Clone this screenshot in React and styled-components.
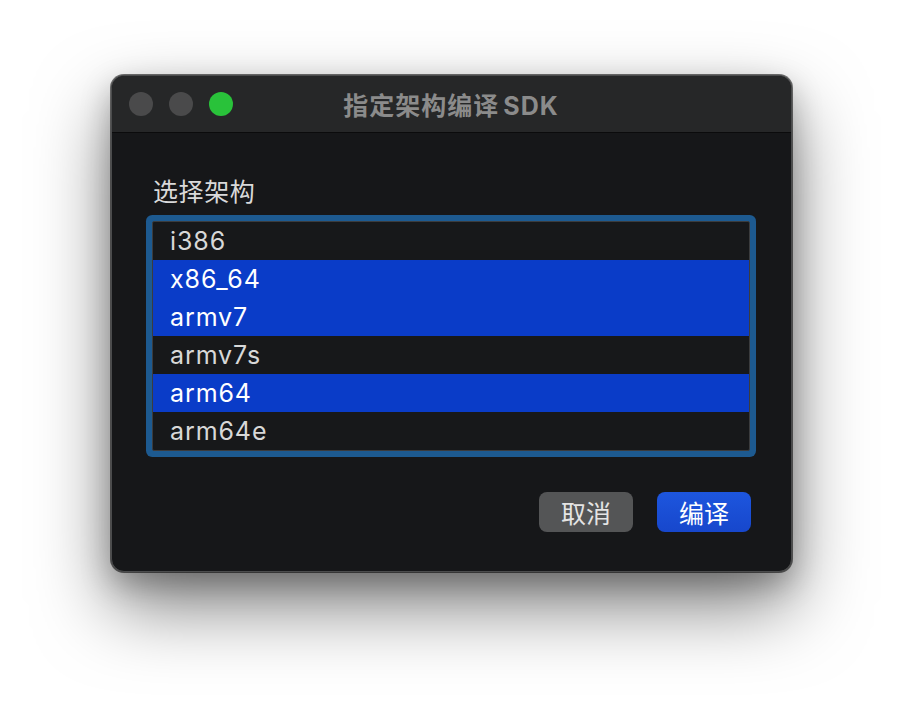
import React from "react";
import styled, { createGlobalStyle } from "styled-components";

const GlobalStyle = createGlobalStyle`
  html, body {
    margin: 0;
    padding: 0;
    background: #ffffff;
  }
  body {
    font-family: Inter, "Noto Sans CJK SC", sans-serif;
  }
`;

const Desktop = styled.div`
  width: 904px;
  height: 720px;
  padding: 75px 0 0 111px;
  box-sizing: border-box;
`;

const Window = styled.div`
  width: 681px;
  height: 497px;
  box-sizing: border-box;
  background: #161719;
  border: 1px solid #4b4c4d;
  border-radius: 13px;
  overflow: hidden;
  box-shadow: 0 0 0 1px rgba(0, 0, 0, 0.55), 0 34px 75px rgba(0, 0, 0, 0.5),
    0 12px 30px rgba(0, 0, 0, 0.25);
  display: flex;
  flex-direction: column;
`;

const TitleBar = styled.div`
  height: 56px;
  flex: none;
  background: #262728;
  border-bottom: 1px solid #0b0b0c;
  display: grid;
  grid-template-columns: 1fr auto 1fr;
  align-items: center;
  padding: 0 17px;
`;

const Lights = styled.div`
  display: flex;
  gap: 16px;
`;

const Light = styled.span`
  width: 24px;
  height: 24px;
  border-radius: 50%;
  background: ${(p) => p.$color};
`;

const Title = styled.div`
  font-family: Inter, "Noto Sans CJK SC", sans-serif;
  font-weight: 700;
  font-size: 25px;
  letter-spacing: 1px;
  color: #8b8b8b;
  margin-left: -1px;
`;

const Sdk = styled.span`
  margin-left: 4px;
`;

const Body = styled.div`
  flex: 1;
  padding: 42px 34px 40px 35px;
  display: flex;
  flex-direction: column;
`;

const Label = styled.div`
  font-family: "Noto Sans CJK SC", sans-serif;
  font-size: 25px;
  line-height: 30px;
  color: #d9d9d9;
  padding-left: 6px;
  letter-spacing: 0.6px;
`;

const List = styled.div`
  margin: 16px 7px 0 5px;
  border: 1px solid #3b3c3e;
  background: #17181a;
  box-shadow: 0 0 0 6px #1d5a90;
  border-radius: 2px;
`;

const Row = styled.div`
  height: 38px;
  display: flex;
  align-items: center;
  padding-left: 17px;
  font-family: Inter, sans-serif;
  font-size: 25px;
  letter-spacing: 0.9px;
  color: ${(p) => (p.$selected ? "#ffffff" : "#d8d8d8")};
  background: ${(p) => (p.$selected ? "#0a3cc8" : "transparent")};
`;

const Actions = styled.div`
  margin-top: 41px;
  display: flex;
  justify-content: flex-end;
  gap: 24px;
  padding-right: 6px;
`;

const Button = styled.button`
  width: 94px;
  height: 40px;
  border: none;
  border-radius: 8px;
  font-family: "Noto Sans CJK SC", sans-serif;
  font-size: 25px;
  color: ${(p) => (p.$primary ? "#ffffff" : "#e4e4e4")};
  background: ${(p) =>
    p.$primary ? "linear-gradient(#1d56de, #1747cc)" : "#545556"};
  display: flex;
  align-items: center;
  justify-content: center;
  padding: 0;
`;

const archs = [
  { name: "i386", selected: false },
  { name: "x86_64", selected: true },
  { name: "armv7", selected: true },
  { name: "armv7s", selected: false },
  { name: "arm64", selected: true },
  { name: "arm64e", selected: false },
];

export default function App() {
  return (
    <Desktop>
      <GlobalStyle />
      <Window>
        <TitleBar>
          <Lights>
            <Light $color="#4a4a4b" />
            <Light $color="#4a4a4b" />
            <Light $color="#29c23a" />
          </Lights>
          <Title>
            指定架构编译<Sdk>SDK</Sdk>
          </Title>
          <div />
        </TitleBar>
        <Body>
          <Label>选择架构</Label>
          <List>
            {archs.map((a) => (
              <Row key={a.name} $selected={a.selected}>
                {a.name}
              </Row>
            ))}
          </List>
          <Actions>
            <Button>取消</Button>
            <Button $primary>编译</Button>
          </Actions>
        </Body>
      </Window>
    </Desktop>
  );
}
